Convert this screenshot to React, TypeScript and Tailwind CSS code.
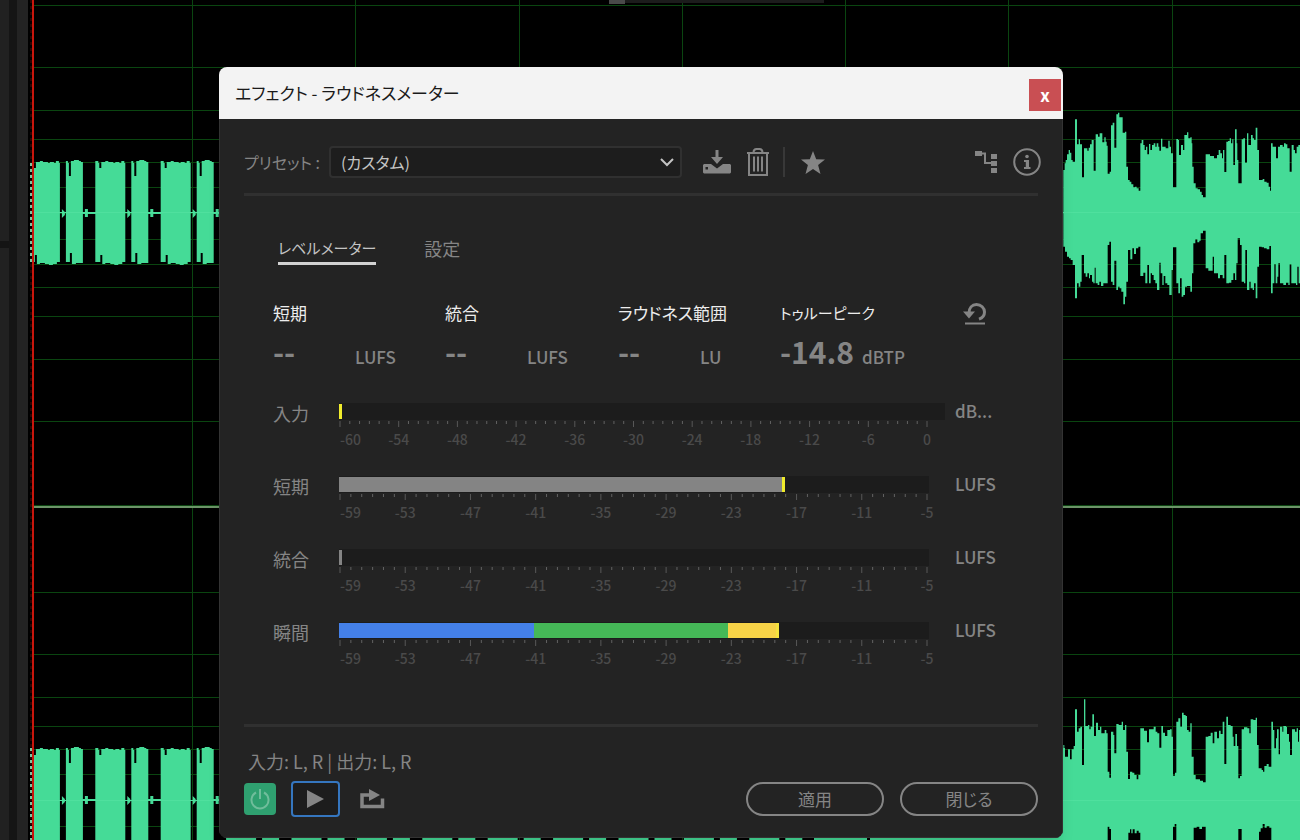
import React from 'react';

// Grid line distances from the centre of a channel
const GRID_OFFSETS = [0, 26, 51, 74, 103, 146, 208];
const CHANNEL_CENTERS = [213, 800];
const GRID_COLUMNS = [192, 355, 519, 682, 845, 1008, 1172];
const BURSTS = Array.from({ length: 12 }, (_, i) => 95.3 + (i - 1) * 65.4);

// Envelopes as x,y steps, in thirds of a pixel
const TOP_UPPER =
  '190,510 194,490 197,480 201,463 206,450 210,458 214,480 218,485 225,358 231,433 236,418 240,433 246,532 252,445 262,452 266,443 270,433 275,420 281,512 287,403 294,410 299,400 307,427 313,412 317,425 320,437 323,521 329,515 333,376 338,368 343,443 349,343 354,338 358,352 368,398 375,395 379,500 384,540 389,545 394,553 400,562 405,560 410,565 416,572 421,430 425,420 430,435 434,450 438,440 442,463 447,432 451,450 456,435 461,430 466,440 470,430 475,440 478,452 483,416 487,440 497,445 505,422 509,440 513,460 519,562 529,417 534,420 537,465 543,435 549,450 553,405 561,397 565,415 571,412 575,430 577,500 581,550 587,565 593,568 600,575 605,585 609,592 617,463 630,468 642,475 651,465 656,450 661,460 666,475 669,450 673,516 679,425 684,423 689,415 693,430 697,418 700,495 705,388 710,430 712,480 715,550 725,418 730,415 735,488 741,400 745,435 753,405 758,415 762,420 767,383 772,450 777,540 788,537 793,545 800,548 806,560 810,572 813,430 818,440 828,475 834,440 840,435 848,440 852,430 857,433 862,445 869,515 875,435 881,450 885,460 890,440 895,435';
const TOP_LOWER =
  '190,740 195,755 201,770 207,775 212,780 218,795 225,895 231,850 236,860 241,845 245,765 252,820 257,830 262,820 267,835 270,825 276,845 280,850 284,803 287,850 293,855 298,845 303,858 310,850 323,735 328,725 333,845 338,855 343,782 349,870 354,860 359,865 364,875 370,913 375,890 379,845 384,750 391,778 397,745 402,762 408,745 415,740 421,828 430,818 436,850 442,795 447,850 452,820 456,825 461,840 466,850 471,870 478,788 482,820 487,855 491,828 496,850 502,855 508,885 515,810 519,742 529,850 535,880 540,835 545,890 550,885 555,860 561,858 571,875 576,820 580,730 586,718 592,727 598,722 602,700 609,692 617,805 625,812 638,770 642,820 654,835 660,825 668,835 673,765 679,850 687,848 694,840 700,820 705,840 709,790 713,715 720,735 725,845 732,850 736,750 741,870 748,845 752,865 758,870 762,850 767,895 772,800 777,740 785,742 792,745 800,748 808,738 813,880 818,850 823,792 827,850 832,830 835,790 840,850 850,855 858,848 865,855 869,793 874,850 888,855 892,800 896,850';
const BOTTOM_UPPER =
  '190,255 193,290 204,268 210,298 215,268 221,258 225,148 231,215 236,205 241,200 246,315 252,118 256,198 264,195 268,208 272,200 277,163 282,228 288,188 294,210 300,200 304,220 314,210 319,220 323,335 328,353 333,215 340,225 343,280 349,192 356,195 365,185 369,210 375,195 379,275 384,357 390,335 397,338 403,345 410,358 415,345 421,205 432,212 441,247 447,208 461,200 467,215 472,220 478,263 484,198 489,218 495,228 502,210 510,208 515,230 519,347 525,338 529,185 535,175 541,200 546,158 551,165 557,168 561,210 566,215 571,190 575,290 581,345 587,358 600,362 609,367 617,230 625,228 632,218 638,250 643,215 651,235 657,212 662,222 668,185 673,312 679,170 684,195 692,198 698,230 701,258 706,222 711,258 715,355 720,348 725,208 732,202 742,205 748,220 752,178 760,180 767,173 771,255 776,325 785,330 789,335 793,318 800,312 806,320 814,185 819,210 823,265 828,235 831,208 836,283 840,200 847,215 850,198 858,200 861,222 867,245 870,285 876,208 885,215 890,205 894,245 897,210';
const BOTTOM_LOWER =
  '190,545 323,500 328,507 333,545 385,518 390,508 394,520 398,508 404,520 410,512 416,518 421,545 519,500 524,492 529,545 581,503 590,500 598,507 606,500 617,545 715,507 725,545 777,515 782,505 788,492 794,503 800,498 808,503 814,545';

function steps(points: string) {
  return points
    .split(' ')
    .map((point) => {
      const [x, y] = point.split(',');
      return `H${x}V${y}`;
    })
    .join('');
}

function burstPath(center: number, x: number) {
  const t = center - 52;
  const b = center + 51;
  const first = `M${x} ${t}h3v2h1v5h2v-6h4v-1h3v1h5v1h2v-1h4v1h2v-2h3v2h1V${b - 2}h-3v2h-4v1h-4v-1h-4v-1h-5v1h-3v-9h-2v7h-5z`;
  const second = `M${x + 36} ${t}h2v2h1v13h2v-15h3v-1h5v1h2v1h2V${b - 1}h-7v1h-4v-11h-2v9h-4z`;
  const tails = `M${x + 32} ${center - 4}l3 3v3l-3 3zM${x + 52} ${center - 1}h3v-3h3v3h8v2h-8v3h-3v-3h-3z`;
  return first + second + tails;
}

const Waveform: React.FC = () => (
  <svg className="absolute inset-0 h-full w-full" aria-hidden="true">
    <rect width="100%" height="100%" fill="#000" />
    <g fill="#0a4510">
      {CHANNEL_CENTERS.map((center) =>
        GRID_OFFSETS.flatMap((offset) => [
          <rect key={`${center}-${offset}`} x="34" y={center - offset} width="100%" height="1" />,
          <rect key={`${center}+${offset}`} x="34" y={center + offset} width="100%" height="1" />,
        ]),
      )}
      {GRID_COLUMNS.map((x) => (
        <rect key={x} x={x} y="0" width="1" height="100%" />
      ))}
    </g>
    <rect x="34" y="505" width="100%" height="3" fill="#0b4410" />
    <rect x="34" y="506" width="100%" height="2" fill="#6c9468" />

    <g fill="#45db97">
      {CHANNEL_CENTERS.map((center) => (
        <path key={center} d={BURSTS.map((x) => burstPath(center, x)).join('')} />
      ))}
      <path d="M814 748h53v92h-53zM870 748h195v92H870z" />
      <g transform="translate(1000 0) scale(0.33333)">
        <path d={`M190 638${steps(TOP_UPPER)}H905V638z`} />
        <path d={`M190 637${steps(TOP_LOWER)}H905V637z`} />
      </g>
      <g transform="translate(1000 660) scale(0.33333)">
        <path d={`M190 422${steps(BOTTOM_UPPER)}H905V422z`} />
        <path d={`M190 421${steps(BOTTOM_LOWER)}H905V421z`} />
      </g>
    </g>
    <g fill="#4fe09e">
      <rect x="34" y="212" width="100%" height="1" />
      <rect x="34" y="800" width="100%" height="1" />
    </g>

    <rect x="609" y="0" width="16" height="4" fill="#4a4a4a" />
    <rect x="625" y="0" width="199" height="3" fill="#1c1c1c" />
    <rect x="28" y="0" width="5" height="100%" fill="#000" />
    <g strokeDasharray="3 3">
      <path d="M31 0V1600" stroke="#4d0c08" />
      <path d="M31 163V264M31 748V840" stroke="#7cc79f" strokeWidth="2" />
    </g>
    <rect x="32" y="0" width="2" height="100%" fill="#c8160c" />
  </svg>
);

const SidePanels: React.FC = () => (
  <div className="relative flex min-h-screen w-7">
    <div className="flex w-[9px] flex-col">
      <div className="h-[241px] bg-[#212121]" />
      <div className="h-[7px] bg-[#141414]" />
      <div className="flex-1 bg-[#212121]" />
    </div>
    <div className="w-2 bg-[#151515]" />
    <div className="flex-1 bg-[#232323]" />
  </div>
);

const SaveIcon = () => (
  <svg width="28" height="24" viewBox="0 0 28 24" fill="currentColor">
    <path d="M12.500 0h3v7H20l-6 7-6-7h4.500z" />
    <path fillRule="evenodd" d="M1 14h7l6 4.500 6-4.500h7l1 1v7.500l-1 1H1l-1-1V15zM2.500 17v2.500H5V17z" />
  </svg>
);

const TrashIcon = () => (
  <svg width="22" height="28" viewBox="0 0 22 28" fill="none" stroke="currentColor" strokeWidth="2">
    <path d="M0 5h22M6.500 4.500C6.500 2 8 1 9.500 1h3c1.500 0 3 1 3 3.500M2 5.500V27h18V5.500" />
    <path d="M7 8.500v15M11 8.500v15M15 8.500v15" />
  </svg>
);

const StarIcon = () => (
  <svg width="24" height="23" viewBox="0 0 24 23" fill="currentColor">
    <path d="M12 0l3.200 8.200 8.800.4-6.900 5.500L19.500 23 12 18 4.500 23l2.400-8.900L0 8.600l8.800-.4z" />
  </svg>
);

const RoutingIcon = () => (
  <svg width="22" height="22" viewBox="0 0 22 22" fill="currentColor">
    <path d="M0 0h7v5H0zM16 3h6v5h-6zM16 10h6v5h-6zM16 17h6v5h-6z" />
    <path d="M6 2.500h4V12h6" fill="none" stroke="currentColor" strokeWidth="2" />
  </svg>
);

const InfoIcon = () => (
  <svg width="28" height="28" viewBox="0 0 28 28" fill="currentColor">
    <circle cx="14" cy="14" r="12.800" fill="none" stroke="currentColor" strokeWidth="2" />
    <circle cx="14" cy="8.500" r="1.800" />
    <path d="M11 12h5v7h1.500v2H11v-2h1.800v-5H11z" />
  </svg>
);

const ResetIcon = () => (
  <svg width="24" height="22" viewBox="0 0 24 22" fill="none" stroke="currentColor">
    <path d="M6 10C6 5 9 1.500 13.500 1.500S21.500 5 21.500 9c0 3.500-2 6-5.500 7.200" strokeWidth="3" />
    <path d="M0 8.500h12L6 15.500z" fill="currentColor" stroke="none" />
    <path d="M2 20.500h20" strokeWidth="2" />
  </svg>
);

const PowerIcon = () => (
  <svg width="20" height="22" viewBox="0 0 20 22" fill="none" stroke="currentColor" strokeWidth="2">
    <path d="M6 4.500a8.500 8.500 0 1 0 8 0M10 1v10" />
  </svg>
);

const LoopIcon = () => (
  <svg width="25" height="20" viewBox="0 0 25 20" fill="none" stroke="currentColor">
    <path d="M10 6H2v11.500h20.500V9.500" strokeWidth="3.500" />
    <path d="M9 0l11 6-11 6z" fill="currentColor" stroke="none" />
  </svg>
);

interface Metric {
  name: string;
  value: string;
  unit: string;
  compact?: boolean;
}

const METRICS: Metric[] = [
  { name: '短期', value: '--', unit: 'LUFS' },
  { name: '統合', value: '--', unit: 'LUFS' },
  { name: 'ラウドネス範囲', value: '--', unit: 'LU' },
  { name: 'トゥルーピーク', value: '-14.8', unit: 'dBTP', compact: true },
];

interface MeterProps {
  name: string;
  unit: string;
  from: number;
  to: number;
  wide?: boolean;
  children: React.ReactNode;
}

const Meter: React.FC<MeterProps> = ({ name, unit, from, to, wide, children }) => {
  const span = to - from;
  const ticks = Array.from({ length: span + 1 }, (_, i) => i);
  const labels = ticks.filter((i) => i % 6 === 0).map((i) => from + i);

  return (
    <div className="flex items-start">
      <span className="w-[66px] text-lg leading-5">{name}</span>
      <div className="mr-[10px] flex-1">
        <div className={wide ? 'flex h-[17px] bg-[#1c1c1c] py-px' : 'mr-4 flex h-[17px] bg-[#1c1c1c] py-px'}>
          {children}
        </div>
        <div className="mr-[18px] ml-px">
          <svg className="block h-[7px] w-full overflow-visible" aria-hidden="true">
            {ticks.map((i) => (
              <line
                key={i}
                x1={`${(i / span) * 100}%`}
                x2={`${(i / span) * 100}%`}
                y1="1"
                y2={i % 6 === 0 ? 7 : 4}
                stroke={i % 6 === 0 ? '#585858' : '#626262'}
              />
            ))}
          </svg>
          <div className="mt-1 flex justify-between text-sm leading-4 font-medium text-[#4a4a4a]">
            {labels.map((label, i) => (
              <span key={label} className={i === 0 ? 'flex w-0 justify-start' : 'flex w-0 justify-center'}>
                {label}
              </span>
            ))}
          </div>
        </div>
      </div>
      <span className="w-[60px] text-[17px] leading-4 font-medium">{unit}</span>
    </div>
  );
};

const EffectWindow: React.FC = () => (
  <section
    aria-label="エフェクト - ラウドネスメーター"
    className="absolute top-[67px] left-[219px] w-[844px] overflow-hidden rounded-lg bg-[#232323] text-[#858585] shadow-lg"
  >
    <header className="flex h-[52px] items-center justify-between bg-[#f3f3f3] pr-[2px] pl-4">
      <h1 className="text-[17px] text-[#1a1a1a]">エフェクト - ラウドネスメーター</h1>
      <button
        type="button"
        aria-label="ウィンドウを閉じる"
        className="mt-1 h-8 w-8 bg-[#c94f53] text-[17px] leading-7 font-bold text-white"
      >
        x
      </button>
    </header>

    <div className="border-x border-b border-[#333] px-6 pt-[27px] pb-5">
      <div className="-mr-[3px] flex h-8 items-center">
        <label htmlFor="preset" className="w-[85px] text-base whitespace-nowrap">
          プリセット :
        </label>
        <div className="relative">
          <select
            id="preset"
            className="h-8 w-[353px] appearance-none rounded border-2 border-[#303030] bg-[#1d1d1d] pl-[10px] text-base leading-7 text-[#c4c4c4]"
          >
            <option>(カスタム)</option>
          </select>
          <svg
            className="pointer-events-none absolute top-3 right-2"
            width="14"
            height="9"
            viewBox="0 0 14 9"
            fill="none"
            stroke="#c4c4c4"
            strokeWidth="2"
            aria-hidden="true"
          >
            <path d="M1 1l6 6 6-6" />
          </svg>
        </div>
        <button type="button" aria-label="プリセットを保存" className="ml-[21px]">
          <SaveIcon />
        </button>
        <button type="button" aria-label="プリセットを削除" className="ml-4">
          <TrashIcon />
        </button>
        <div className="ml-[14px] h-[30px] w-[2px] bg-[#383838]" />
        <button type="button" aria-label="お気に入り" className="ml-4">
          <StarIcon />
        </button>
        <button type="button" aria-label="チャンネルマップ" className="ml-auto">
          <RoutingIcon />
        </button>
        <button type="button" aria-label="情報" className="ml-4">
          <InfoIcon />
        </button>
      </div>

      <hr className="mt-[15px] border-t-3 border-[#303030]" />

      <div role="tablist" className="mt-[38px] flex gap-12 pl-[34px] leading-7">
        <button
          type="button"
          role="tab"
          aria-selected="true"
          className="border-b-3 border-[#d2d2d2] text-[15px] text-[#c4c4c4]"
        >
          レベルメーター
        </button>
        <button type="button" role="tab" aria-selected="false" className="border-b-3 border-transparent text-lg leading-7">
          設定
        </button>
      </div>

      <div className="mt-[34px] flex pr-[47px] pl-[29px]">
        <dl className="grid flex-1 grid-cols-[172px_173px_162px_1fr]">
          {METRICS.map((metric, i) => (
            <div key={i}>
              <dt
                className={
                  metric.compact ? 'text-[15px] leading-7 text-[#ededed]' : 'text-[17px] leading-7 text-[#ededed]'
                }
              >
                {metric.name}
              </dt>
              <dd className="mt-1 flex h-10 items-baseline text-[17px] leading-10 font-medium">
                <span className="w-[82px] text-3xl leading-10 font-bold">{metric.value}</span>
                {metric.unit}
              </dd>
            </div>
          ))}
        </dl>
        <button type="button" aria-label="リセット" className="mt-1 self-start pr-1">
          <ResetIcon />
        </button>
      </div>

      <div className="mt-8 flex flex-col gap-[29px] pr-[23px] pl-[29px]">
        <Meter name="入力" unit="dB..." from={-60} to={0} wide>
          <div className="w-[3px] bg-[#f0ec2c]" />
        </Meter>
        <Meter name="短期" unit="LUFS" from={-59} to={-5}>
          <div className="w-[75%] bg-[#848484]" />
          <div className="w-[3px] bg-[#f0ec2c]" />
        </Meter>
        <Meter name="統合" unit="LUFS" from={-59} to={-5}>
          <div className="w-[3px] bg-[#848484]" />
        </Meter>
        <Meter name="瞬間" unit="LUFS" from={-59} to={-5}>
          <div className="w-[33%] bg-[#4480e8]" />
          <div className="w-[33%] bg-[#45b857]" />
          <div className="w-[8%] bg-[#f7d347]" />
          <div className="w-[3px] bg-[#f5e33d]" />
        </Meter>
      </div>

      <hr className="mt-[58px] border-t-3 border-[#303030]" />

      <p className="mt-[22px] pl-1 text-lg leading-6">入力: L, R | 出力: L, R</p>
      <div className="mt-2 flex items-center">
        <button
          type="button"
          aria-label="電源"
          className="flex h-8 w-8 items-center justify-center rounded bg-[#2fa070] text-[#70bd9b]"
        >
          <PowerIcon />
        </button>
        <button
          type="button"
          aria-label="再生"
          className="ml-[15px] flex h-9 w-[49px] items-center justify-center rounded border-2 border-[#3576bf] bg-[#1d1d1d]"
        >
          <svg width="17" height="18" viewBox="0 0 17 18" fill="currentColor">
            <path d="M0 0l17 9-17 9z" />
          </svg>
        </button>
        <button type="button" aria-label="ループ再生" className="ml-5">
          <LoopIcon />
        </button>
        <button
          type="button"
          className="ml-auto h-[34px] w-[138px] rounded-full border-2 border-[#858585] text-[17px] leading-7"
        >
          適用
        </button>
        <button
          type="button"
          className="ml-4 h-[34px] w-[138px] rounded-full border-2 border-[#858585] text-[17px] leading-7"
        >
          閉じる
        </button>
      </div>
    </div>
  </section>
);

export default function App() {
  return (
    <main
      lang="ja"
      className="relative min-h-screen w-full overflow-hidden bg-black font-['Noto_Sans_CJK_JP',sans-serif] [font-feature-settings:'palt']"
    >
      <Waveform />
      <SidePanels />
      <EffectWindow />
    </main>
  );
}
